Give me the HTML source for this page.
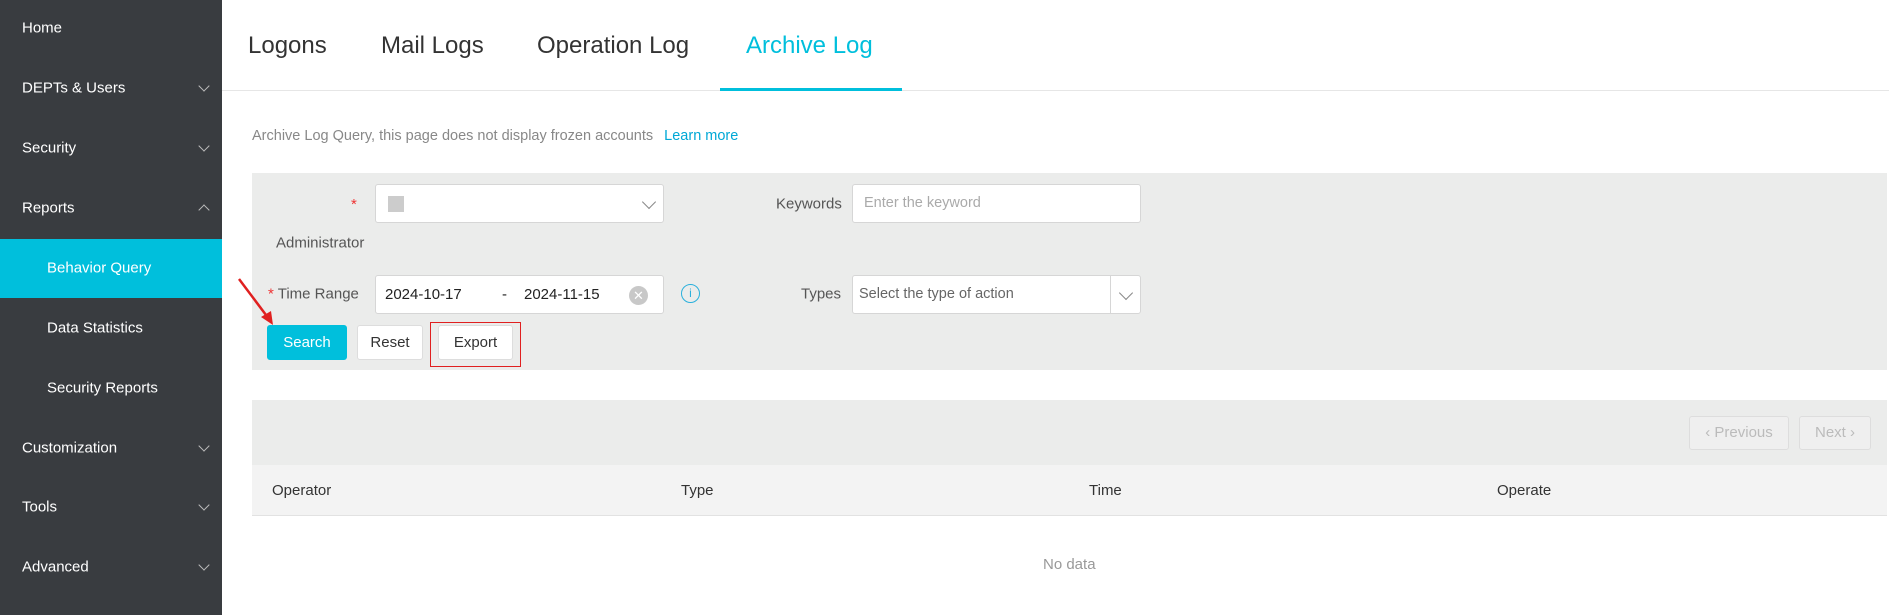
<!DOCTYPE html><html><head><meta charset="utf-8"><style>
*{margin:0;padding:0;box-sizing:border-box}
body{width:1889px;height:615px;overflow:hidden;background:#fff;font-family:"Liberation Sans",sans-serif;position:relative;color:#333}
.a{position:absolute;white-space:nowrap}
.sb{position:absolute;left:0;top:0;width:222px;height:615px;background:#393c40}
.mi{position:absolute;left:22px;color:#fff;font-size:15px;transform:translateY(-50%)}
.sub{left:47px}
.chev{position:absolute;left:200px;width:8px;height:8px;border-right:1.3px solid #bbb;border-bottom:1.3px solid #bbb;transform:rotate(45deg)}
.tab{position:absolute;top:32px;font-size:24px;color:#333}
.box{position:absolute;background:#fff;border:1px solid #d6d6d6;border-radius:3px}
.lbl{position:absolute;font-size:15px;color:#555;transform:translateY(-50%)}
.btn{position:absolute;top:325px;height:35px;border:1px solid #ddd;border-radius:3px;background:#fff;font-size:15px;text-align:center;line-height:33px;color:#333}
.th{position:absolute;top:482px;font-size:15px;color:#333}
</style></head><body>
<div class="sb">
<div style="position:absolute;left:0;top:239px;width:222px;height:59px;background:#00bfdc"></div>
<div class="mi" style="top:28px">Home</div>
<div class="mi" style="top:88px">DEPTs &amp; Users</div><div class="chev" style="top:82px"></div>
<div class="mi" style="top:148px">Security</div><div class="chev" style="top:142px"></div>
<div class="mi" style="top:208px">Reports</div><div class="chev" style="top:206px;transform:rotate(225deg)"></div>
<div class="mi sub" style="top:268px">Behavior Query</div>
<div class="mi sub" style="top:328px">Data Statistics</div>
<div class="mi sub" style="top:388px">Security Reports</div>
<div class="mi" style="top:448px">Customization</div><div class="chev" style="top:442px"></div>
<div class="mi" style="top:507px">Tools</div><div class="chev" style="top:501px"></div>
<div class="mi" style="top:567px">Advanced</div><div class="chev" style="top:561px"></div>
</div>
<div class="tab" style="left:248px">Logons</div>
<div class="tab" style="left:381px">Mail Logs</div>
<div class="tab" style="left:537px">Operation Log</div>
<div class="tab" style="left:746px;color:#00bfdc">Archive Log</div>
<div class="a" style="left:222px;top:90px;width:1667px;height:1px;background:#e6e6e6"></div>
<div class="a" style="left:720px;top:88px;width:182px;height:3px;background:#00bfdc"></div>
<div class="a" style="left:252px;top:128px;font-size:14.5px;color:#888">Archive Log Query, this page does not display frozen accounts <span style="color:#00a8d6;margin-left:7px">Learn more</span></div>
<div class="a" style="left:252px;top:173px;width:1635px;height:197px;background:#ebeceb"></div>
<div class="a" style="left:351px;top:196px;color:#e33;font-size:15px">*</div>
<div class="box" style="left:375px;top:184px;width:289px;height:39px"><div class="a" style="left:12px;top:11px;width:16px;height:16px;background:#ccc"></div><div class="a" style="left:268px;top:12px;width:10px;height:10px;border-right:1.3px solid #888;border-bottom:1.3px solid #888;transform:rotate(45deg)"></div></div>
<div class="lbl" style="left:776px;top:204px">Keywords</div>
<div class="box" style="left:852px;top:184px;width:289px;height:39px"><span class="a" style="left:11px;top:10px;font-size:14.5px;color:#aaa">Enter the keyword</span></div>
<div class="lbl" style="left:276px;top:243px">Administrator</div>
<div class="lbl" style="left:268px;top:294px"><span style="color:#e33">*</span> Time Range</div>
<div class="box" style="left:375px;top:275px;width:289px;height:39px;font-size:15px;color:#222"><span class="a" style="left:9px;top:10px">2024-10-17</span><span class="a" style="left:126px;top:10px">-</span><span class="a" style="left:148px;top:10px">2024-11-15</span><div class="a" style="left:253px;top:10px;width:19px;height:19px;border-radius:50%;background:#c8c8c8;color:#fff;font-size:13px;text-align:center;line-height:19px">✕</div></div>
<div class="a" style="left:681px;top:284px;width:19px;height:19px;border:1.3px solid #2ab0dc;border-radius:50%;color:#2ab0dc;font-size:12px;text-align:center;line-height:17px">i</div>
<div class="lbl" style="left:801px;top:294px">Types</div>
<div class="box" style="left:852px;top:275px;width:289px;height:39px"><span class="a" style="left:6px;top:10px;font-size:14.5px;color:#666">Select the type of action</span><div class="a" style="left:257px;top:0;width:1px;height:37px;background:#d6d6d6"></div><div class="a" style="left:268px;top:12px;width:10px;height:10px;border-right:1.3px solid #888;border-bottom:1.3px solid #888;transform:rotate(45deg)"></div></div>
<div class="btn" style="left:267px;width:80px;background:#00bfdc;border-color:#00bfdc;color:#fff">Search</div>
<div class="btn" style="left:357px;width:66px">Reset</div>
<div class="btn" style="left:438px;width:75px">Export</div>
<div class="a" style="left:430px;top:322px;width:91px;height:45px;border:1.5px solid #e02020"></div>
<svg class="a" style="left:235px;top:275px" width="45" height="55"><line x1="4" y1="4" x2="34" y2="44" stroke="#e02020" stroke-width="2.5"/><polygon points="38,50 26,42 36,36" fill="#e02020"/></svg>
<div class="a" style="left:252px;top:400px;width:1635px;height:65px;background:#ebeceb"></div>
<div class="a" style="left:1689px;top:416px;width:100px;height:34px;border:1px solid #ddd;border-radius:3px;background:#efefef;color:#bbb;font-size:15px;text-align:center;line-height:32px">‹ Previous</div>
<div class="a" style="left:1799px;top:416px;width:72px;height:34px;border:1px solid #ddd;border-radius:3px;background:#efefef;color:#bbb;font-size:15px;text-align:center;line-height:32px">Next ›</div>
<div class="a" style="left:252px;top:465px;width:1635px;height:51px;background:#f3f3f3;border-bottom:1px solid #e2e2e2"></div>
<div class="th" style="left:272px">Operator</div>
<div class="th" style="left:681px">Type</div>
<div class="th" style="left:1089px">Time</div>
<div class="th" style="left:1497px">Operate</div>
<div class="a" style="left:1043px;top:556px;font-size:15px;color:#999">No data</div>
</body></html>
